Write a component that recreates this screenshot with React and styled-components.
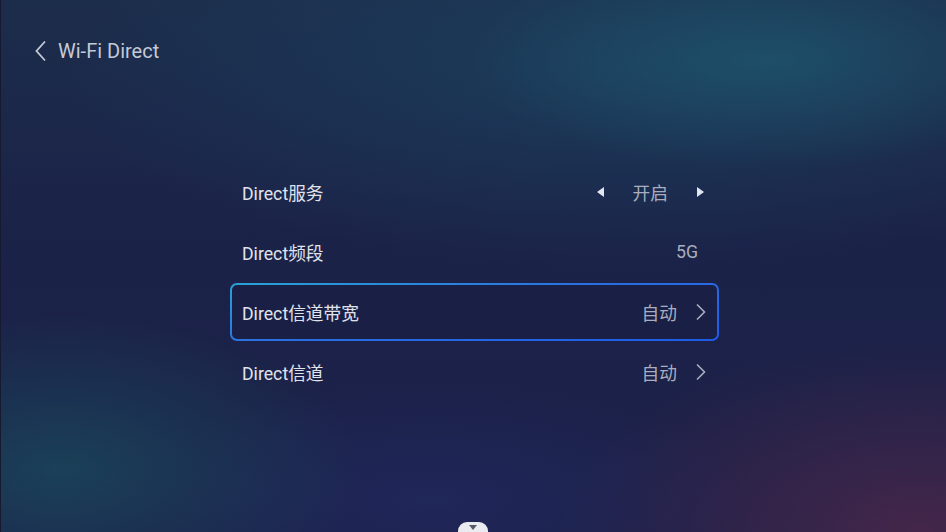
import styled, { createGlobalStyle } from "styled-components";

const GlobalStyle = createGlobalStyle`
  html, body {
    margin: 0;
    padding: 0;
    background: #1b2148;
  }
  * {
    box-sizing: border-box;
  }
`;

const Screen = styled.div`
  position: relative;
  width: 946px;
  height: 532px;
  overflow: hidden;
  font-family: Roboto, "Noto Sans CJK SC", sans-serif;
  box-shadow: inset 1px 0 0 #151a30;
  background:
    radial-gradient(ellipse 300px 110px at 770px 60px, rgba(30, 88, 112, 0.7), transparent),
    radial-gradient(ellipse 560px 200px at 620px 70px, rgba(28, 74, 104, 0.55), transparent),
    radial-gradient(ellipse 300px 160px at 60px 470px, rgba(26, 72, 92, 0.8), transparent),
    radial-gradient(ellipse 320px 120px at 430px 500px, rgba(34, 44, 100, 0.6), transparent),
    radial-gradient(ellipse 360px 190px at 920px 530px, rgba(78, 40, 74, 0.8), transparent),
    linear-gradient(180deg, #1c2d4b 0%, #1b2248 45%, #1c2049 100%);
`;

const Header = styled.header`
  display: flex;
  align-items: center;
  gap: 10px;
  padding: 38px 0 0 34px;
  height: 64px;
  color: #c4c9d6;
  font-size: 20px;
`;

const List = styled.div`
  display: flex;
  flex-direction: column;
  gap: 2px;
  width: 489px;
  margin: 99px 0 0 230px;
`;

const Row = styled.div`
  display: flex;
  align-items: center;
  justify-content: space-between;
  height: 58px;
  padding: 0 10px;
  border-radius: 7px;
  border: 2px solid transparent;
  ${(p) =>
    p.$focused &&
    `
    background:
      linear-gradient(#1a1f45, #1a1f45) padding-box,
      linear-gradient(170deg, #2aa3d6 0%, #2a6fe0 45%, #1d5be8 100%) border-box;
  `}
`;

const Label = styled.span`
  color: #e0e3ec;
  font-size: 17.7px;
`;

const Value = styled.div`
  display: flex;
  align-items: center;
  gap: ${(p) => p.$gap || 18}px;
  color: #a9aebf;
  font-size: 17.7px;
  padding-right: ${(p) => p.$pad || 0}px;
`;

const Handle = styled.div`
  position: absolute;
  left: 458px;
  bottom: -6px;
  width: 30px;
  height: 16px;
  border-radius: 9px 9px 0 0;
  background: #e9ebf0;
  display: flex;
  justify-content: center;
  padding-top: 3px;
`;

const Back = () => (
  <svg width="14" height="22" viewBox="0 0 14 22">
    <path d="M11 1.5 L2.5 11 L11 20.5" fill="none" stroke="#c4c9d6" strokeWidth="1.8" />
  </svg>
);

const Chevron = () => (
  <svg width="12" height="18" viewBox="0 0 12 18">
    <path d="M2 1.5 L9.5 9 L2 16.5" fill="none" stroke="#a9aebf" strokeWidth="1.6" />
  </svg>
);

const Tri = ({ dir }) => (
  <svg width="8" height="10" viewBox="0 0 8 10">
    {dir === "left" ? (
      <path d="M8 0 L8 10 L1 5 Z" fill="#e3e6ee" />
    ) : (
      <path d="M0 0 L0 10 L7 5 Z" fill="#e3e6ee" />
    )}
  </svg>
);

export default function App() {
  return (
    <>
      <GlobalStyle />
      <Screen>
        <Header>
          <Back />
          <span>Wi-Fi Direct</span>
        </Header>
        <List>
          <Row>
            <Label>Direct服务</Label>
            <Value $gap={29} $pad={2}>
              <Tri dir="left" />
              <span>开启</span>
              <Tri dir="right" />
            </Value>
          </Row>
          <Row>
            <Label>Direct频段</Label>
            <Value $pad={9}>
              <span>5G</span>
            </Value>
          </Row>
          <Row $focused>
            <Label>Direct信道带宽</Label>
            <Value>
              <span>自动</span>
              <Chevron />
            </Value>
          </Row>
          <Row>
            <Label>Direct信道</Label>
            <Value>
              <span>自动</span>
              <Chevron />
            </Value>
          </Row>
        </List>
        <Handle>
          <svg width="8" height="6" viewBox="0 0 8 6">
            <path d="M0 0 L8 0 L4 5 Z" fill="#555a68" />
          </svg>
        </Handle>
      </Screen>
    </>
  );
}
